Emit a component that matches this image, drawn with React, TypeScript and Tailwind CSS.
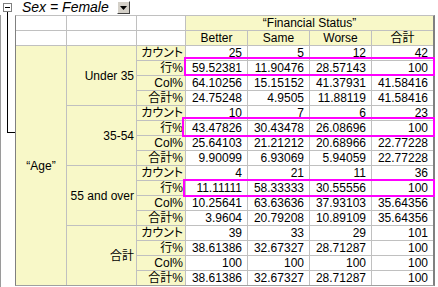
import React from "react";

type Group = {
  label: string;
  rows: [string, string[]][];
};

const groups: Group[] = [
  {
    label: "Under 35",
    rows: [
      ["カウント", ["25", "5", "12", "42"]],
      ["行%", ["59.52381", "11.90476", "28.57143", "100"]],
      ["Col%", ["64.10256", "15.15152", "41.37931", "41.58416"]],
      ["合計%", ["24.75248", "4.9505", "11.88119", "41.58416"]],
    ],
  },
  {
    label: "35-54",
    rows: [
      ["カウント", ["10", "7", "6", "23"]],
      ["行%", ["43.47826", "30.43478", "26.08696", "100"]],
      ["Col%", ["25.64103", "21.21212", "20.68966", "22.77228"]],
      ["合計%", ["9.90099", "6.93069", "5.94059", "22.77228"]],
    ],
  },
  {
    label: "55 and over",
    rows: [
      ["カウント", ["4", "21", "11", "36"]],
      ["行%", ["11.11111", "58.33333", "30.55556", "100"]],
      ["Col%", ["10.25641", "63.63636", "37.93103", "35.64356"]],
      ["合計%", ["3.9604", "20.79208", "10.89109", "35.64356"]],
    ],
  },
  {
    label: "合計",
    rows: [
      ["カウント", ["39", "33", "29", "101"]],
      ["行%", ["38.61386", "32.67327", "28.71287", "100"]],
      ["Col%", ["100", "100", "100", "100"]],
      ["合計%", ["38.61386", "32.67327", "28.71287", "100"]],
    ],
  },
];

const yellow = "bg-[#f8f8c8]";

const App = () => {
  return (
    <div className="relative w-[438px] h-[287px] overflow-hidden bg-white text-black text-[12px] leading-[14px] font-['Liberation_Sans','Noto_Sans_CJK_JP',sans-serif] [font-feature-settings:'palt']">
      <div className="flex">
        {/* tree gutter */}
        <div className="w-[15px] h-[287px] flex flex-col">
          <div className="h-[15px] pl-[3px] pt-[3px]">
            <div className="w-[9px] h-[9px] border border-[#808080] bg-white flex items-center justify-center">
              <div className="w-[5px] h-px bg-black" />
            </div>
          </div>
          <div className="flex-1 border-l border-[#9a9a9a]">
            <div className="ml-[6px] -mt-[3px] w-[9px] h-[121px] border-l border-b border-black" />
          </div>
        </div>

        <div className="flex flex-col">
          {/* page selector */}
          <div className="h-[15px] flex items-center pl-[7px]">
            <span className="italic text-[14px] leading-[15px]">Sex = Female</span>
            <div className="ml-[8px] w-[13px] h-[13px] bg-[#d4d0c8] border border-t-white border-l-white border-r-[#404040] border-b-[#404040] flex items-center justify-center">
              <svg width="7" height="4" viewBox="0 0 7 4">
                <path d="M0 0H7L3.5 4Z" fill="#000" />
              </svg>
            </div>
          </div>

          {/* pivot table */}
          <div className="border-t border-[#c0c0c0] border-l border-l-[#808080] border-r-2 border-r-[#808080] border-b border-b-[#a0a0a0]">
            <div className="grid grid-cols-[50px_69px_48px_61px_61px_61px_61px] grid-rows-[repeat(18,14px)] gap-px bg-[#c0c0c0]">
              <div className="bg-white" />
              <div className="bg-white" />
              <div className="bg-white" />
              <div className={`${yellow} col-span-4 flex items-center justify-center`}>“Financial Status”</div>
              <div className="bg-white" />
              <div className="bg-white" />
              <div className="bg-white" />
              {["Better", "Same", "Worse", "合計"].map((h) => (
                <div key={h} className={`${yellow} flex items-center justify-center`}>
                  {h}
                </div>
              ))}

              <div className={`${yellow} row-span-16 flex items-center justify-center`}>“Age”</div>
              {groups.map((g) => (
                <React.Fragment key={g.label}>
                  <div className={`${yellow} row-span-4 col-start-2 flex items-center justify-end pr-[2px]`}>
                    {g.label}
                  </div>
                  {g.rows.map(([label, vals]) => (
                    <React.Fragment key={label}>
                      <div className={`${yellow} col-start-3 flex items-center justify-end pr-[2px]`}>{label}</div>
                      {vals.map((v, i) => (
                        <div key={i} className="bg-white flex items-center justify-end pr-[5px]">
                          {v}
                        </div>
                      ))}
                    </React.Fragment>
                  ))}
                </React.Fragment>
              ))}
            </div>
          </div>
        </div>
      </div>

      {/* highlight boxes over the 行% rows */}
      <div className="absolute left-[184px] top-[57px] w-[251px] h-[19px] border-2 border-[#ff00ff]" />
      <div className="absolute left-[182px] top-[117px] w-[253px] h-[20px] border-2 border-[#ff00ff]" />
      <div className="absolute left-[183px] top-[179px] w-[252px] h-[18px] border-2 border-[#ff00ff]" />
    </div>
  );
};

export default App;
